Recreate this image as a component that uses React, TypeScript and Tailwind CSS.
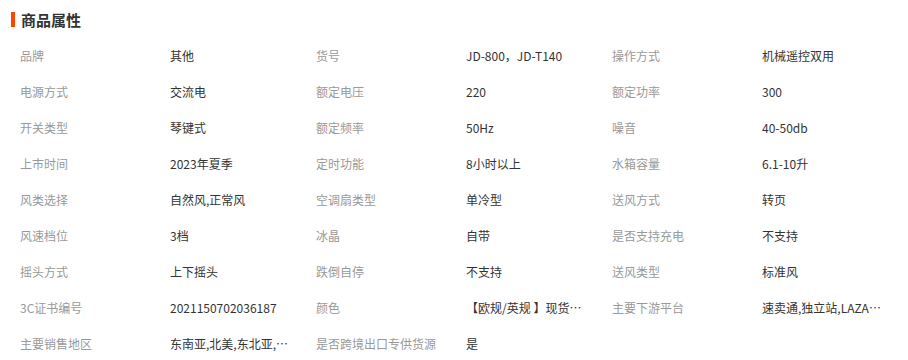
import React from 'react';

const ATTRS: [string, string][] = [
  ['品牌', '其他'],
  ['货号', 'JD-800，JD-T140'],
  ['操作方式', '机械遥控双用'],
  ['电源方式', '交流电'],
  ['额定电压', '220'],
  ['额定功率', '300'],
  ['开关类型', '琴键式'],
  ['额定频率', '50Hz'],
  ['噪音', '40-50db'],
  ['上市时间', '2023年夏季'],
  ['定时功能', '8小时以上'],
  ['水箱容量', '6.1-10升'],
  ['风类选择', '自然风,正常风'],
  ['空调扇类型', '单冷型'],
  ['送风方式', '转页'],
  ['风速档位', '3档'],
  ['冰晶', '自带'],
  ['是否支持充电', '不支持'],
  ['摇头方式', '上下摇头'],
  ['跌倒自停', '不支持'],
  ['送风类型', '标准风'],
  ['3C证书编号', '2021150702036187'],
  ['颜色', '【欧规/英规 】现货/黑色,【欧规/英规 】现货/白色'],
  ['主要下游平台', '速卖通,独立站,LAZADA,SHOPEE'],
  ['主要销售地区', '东南亚,北美,东北亚,中东,欧洲'],
  ['是否跨境出口专供货源', '是'],
];

export default function App() {
  return (
    <div className="w-[908px] h-[360px] bg-white overflow-hidden font-['Noto_Sans_CJK_SC','Liberation_Sans',sans-serif]">
      <div className="h-[38px] flex items-center pl-[11px]">
        <span className="w-1 h-[15px] bg-[#ff4400] mr-[6px]" />
        <h2 className="text-[15px] font-bold text-[#333] leading-none">商品属性</h2>
      </div>
      <div className="flex flex-wrap pl-5">
        {ATTRS.map(([label, value]) => (
          <div key={label} className="w-[296px] h-9 flex items-center text-[12px]">
            <span className="w-[150px] text-[#999] truncate">{label}</span>
            <span className="w-[120px] text-[#333] truncate">{value}</span>
          </div>
        ))}
      </div>
    </div>
  );
}
